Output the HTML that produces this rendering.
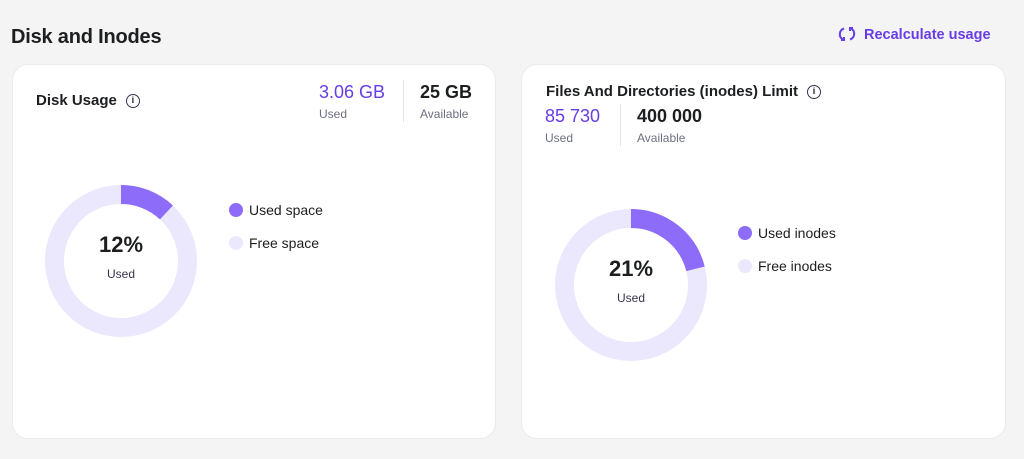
<!DOCTYPE html>
<html><head><meta charset="utf-8"><style>
*{margin:0;padding:0;box-sizing:border-box}
body{width:1024px;height:459px;background:#f4f4f4;font-family:"Liberation Sans",sans-serif;color:#1d1e20;position:relative;overflow:hidden}
.abs{position:absolute;white-space:nowrap}
.card{position:absolute;background:#fff;border:1px solid #ebebee;border-radius:16px}
.h{font-weight:bold;font-size:15px}
.big{font-size:18px;font-weight:bold}
.sm{font-size:12px;color:#6d7081}
.pur{color:#673de6}
.info{display:inline-block;width:14px;height:14px;border:1.5px solid #36344d;border-radius:50%;font-size:9px;text-align:center;line-height:11px;font-weight:bold;vertical-align:middle;margin-left:9px}
.dot{position:absolute;width:14px;height:14px;border-radius:50%}
.lg{font-size:14px}
</style></head><body>
<div class="abs" style="left:11px;top:26px;font-size:20px;font-weight:bold;letter-spacing:-0.2px">Disk and Inodes</div>
<div class="abs pur" style="left:838px;top:25px;font-size:14.5px;font-weight:bold">
<svg width="18" height="18" viewBox="0 0 18 18" style="vertical-align:-4px;margin-right:8px" fill="none" stroke="#673de6" stroke-width="2"><path d="M6 3.5A6 6 0 0 0 5 14.5"/><path d="M12 14.5A6 6 0 0 0 13 3.5"/><path d="M3 15h3v-3M15 3h-3v3"/></svg>Recalculate usage</div>

<div class="card" style="left:12px;top:64px;width:484px;height:375px"></div>
<div class="abs h" style="left:36px;top:92px">Disk Usage<span class="info">i</span></div>
<div class="abs big pur" style="left:319px;top:82px;font-weight:normal">3.06 GB</div>
<div class="abs sm" style="left:319px;top:107px">Used</div>
<div class="abs" style="left:403px;top:80px;width:1px;height:42px;background:#e4e4e7"></div>
<div class="abs big" style="left:420px;top:82px">25 GB</div>
<div class="abs sm" style="left:420px;top:107px">Available</div>
<svg class="abs" style="left:45px;top:185px" width="152" height="152"><circle cx="76" cy="76" r="66.5" fill="none" stroke="#ebe8fd" stroke-width="19"/><circle cx="76" cy="76" r="66.5" fill="none" stroke="#8c6cf9" stroke-width="19" stroke-dasharray="50 400" transform="rotate(-90 76 76)"/></svg>
<div class="abs" style="left:45px;top:232px;width:152px;text-align:center;font-size:22px;font-weight:bold">12%</div>
<div class="abs sm" style="left:45px;top:267px;width:152px;text-align:center;color:#36344d">Used</div>
<div class="dot" style="left:229px;top:203px;background:#8c6cf9"></div>
<div class="abs lg" style="left:249px;top:202px">Used space</div>
<div class="dot" style="left:229px;top:236px;background:#ebe8fd"></div>
<div class="abs lg" style="left:249px;top:235px">Free space</div>

<div class="card" style="left:521px;top:64px;width:485px;height:375px"></div>
<div class="abs h" style="left:546px;top:83px">Files And Directories (inodes) Limit<span class="info">i</span></div>
<div class="abs big pur" style="left:545px;top:106px;font-weight:normal">85 730</div>
<div class="abs sm" style="left:545px;top:131px">Used</div>
<div class="abs" style="left:620px;top:104px;width:1px;height:42px;background:#e4e4e7"></div>
<div class="abs big" style="left:637px;top:106px">400 000</div>
<div class="abs sm" style="left:637px;top:131px">Available</div>
<svg class="abs" style="left:555px;top:209px" width="152" height="152"><circle cx="76" cy="76" r="66.5" fill="none" stroke="#ebe8fd" stroke-width="19"/><circle cx="76" cy="76" r="66.5" fill="none" stroke="#8c6cf9" stroke-width="19" stroke-dasharray="88 400" transform="rotate(-90 76 76)"/></svg>
<div class="abs" style="left:555px;top:256px;width:152px;text-align:center;font-size:22px;font-weight:bold">21%</div>
<div class="abs sm" style="left:555px;top:291px;width:152px;text-align:center;color:#36344d">Used</div>
<div class="dot" style="left:738px;top:226px;background:#8c6cf9"></div>
<div class="abs lg" style="left:758px;top:225px">Used inodes</div>
<div class="dot" style="left:738px;top:259px;background:#ebe8fd"></div>
<div class="abs lg" style="left:758px;top:258px">Free inodes</div>
</body></html>
